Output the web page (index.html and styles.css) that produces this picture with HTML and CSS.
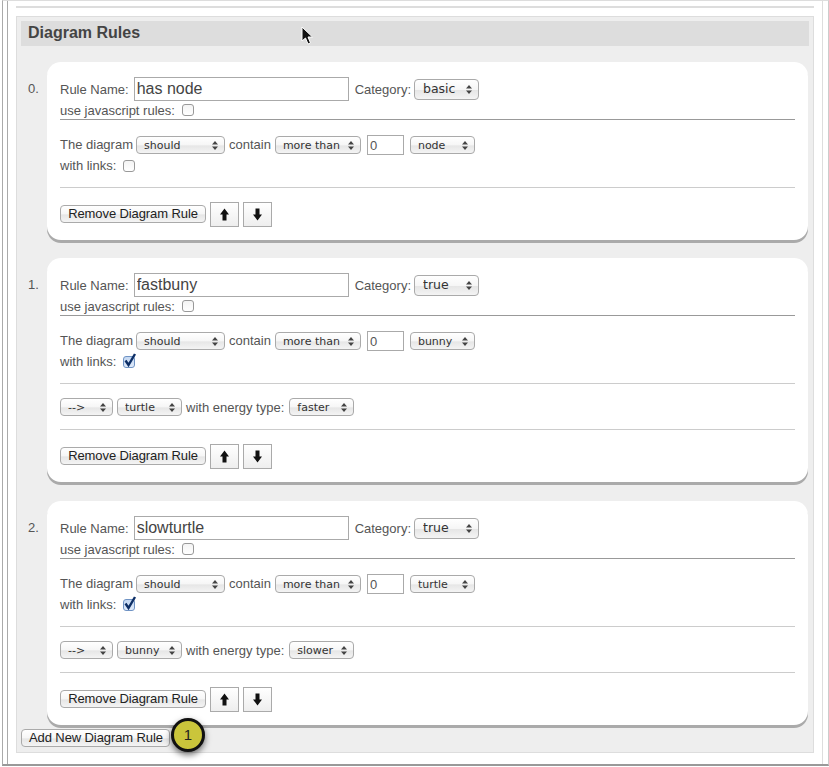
FILE: index.html
```html
<!DOCTYPE html>
<html lang="en">
<head>
  <meta charset="UTF-8">
  <meta name="viewport" content="width=device-width, initial-scale=1.0">
  <title>Diagram Rules</title>
  <link rel="stylesheet" href="styles.css">
</head>
<body>
  <div class="frame">
    <div class="page">
      <div class="top-line"></div>
      <div class="box">
        <h2 class="box-title">Diagram Rules</h2>

        <!-- rule 0 -->
        <div class="rule">
          <div class="rule-num">0.</div>
          <div class="card">
            <div class="row row-name">
              <label>Rule Name:</label>
              <input class="name-input" type="text" value="has node">
              <label>Category:</label>
              <select class="sel-category"><option>basic</option></select>
            </div>
            <div class="row row-js">
              <label>use javascript rules:</label>
              <input class="check" type="checkbox">
            </div>
            <div class="row row-contain">
              <label>The diagram</label>
              <select class="sel-should"><option>should</option></select>
              <label>contain</label>
              <select class="sel-more"><option>more than</option></select>
              <input class="num-input" type="text" value="0">
              <select class="sel-type"><option>node</option></select>
            </div>
            <div class="row row-links">
              <label>with links:</label>
              <input class="check" type="checkbox">
            </div>
            <div class="row row-actions">
              <button class="btn">Remove Diagram Rule</button>
              <button class="arrow-btn"><svg width="11" height="13" viewBox="0 0 11 13"><path d="M5.5 0.5 L10 6.5 H7.5 V12.5 H3.5 V6.5 H1 Z"/></svg></button>
              <button class="arrow-btn"><svg width="11" height="13" viewBox="0 0 11 13"><path d="M5.5 12.5 L10 6.5 H7.5 V0.5 H3.5 V6.5 H1 Z"/></svg></button>
            </div>
          </div>
        </div>

        <!-- rule 1 -->
        <div class="rule rule-mid">
          <div class="rule-num">1.</div>
          <div class="card">
            <div class="row row-name">
              <label>Rule Name:</label>
              <input class="name-input" type="text" value="fastbuny">
              <label>Category:</label>
              <select class="sel-category"><option>true</option></select>
            </div>
            <div class="row row-js">
              <label>use javascript rules:</label>
              <input class="check" type="checkbox">
            </div>
            <div class="row row-contain">
              <label>The diagram</label>
              <select class="sel-should"><option>should</option></select>
              <label>contain</label>
              <select class="sel-more"><option>more than</option></select>
              <input class="num-input" type="text" value="0">
              <select class="sel-type"><option>bunny</option></select>
            </div>
            <div class="row row-links">
              <label>with links:</label>
              <input class="check" type="checkbox" checked>
            </div>
            <div class="row row-link-def">
              <select class="sel-arrow"><option>--&gt;</option></select>
              <select class="sel-type"><option>turtle</option></select>
              <label>with energy type:</label>
              <select class="sel-type"><option>faster</option></select>
            </div>
            <div class="row row-actions">
              <button class="btn">Remove Diagram Rule</button>
              <button class="arrow-btn"><svg width="11" height="13" viewBox="0 0 11 13"><path d="M5.5 0.5 L10 6.5 H7.5 V12.5 H3.5 V6.5 H1 Z"/></svg></button>
              <button class="arrow-btn"><svg width="11" height="13" viewBox="0 0 11 13"><path d="M5.5 12.5 L10 6.5 H7.5 V0.5 H3.5 V6.5 H1 Z"/></svg></button>
            </div>
          </div>
        </div>

        <!-- rule 2 -->
        <div class="rule rule-last">
          <div class="rule-num">2.</div>
          <div class="card">
            <div class="row row-name">
              <label>Rule Name:</label>
              <input class="name-input" type="text" value="slowturtle">
              <label>Category:</label>
              <select class="sel-category"><option>true</option></select>
            </div>
            <div class="row row-js">
              <label>use javascript rules:</label>
              <input class="check" type="checkbox">
            </div>
            <div class="row row-contain">
              <label>The diagram</label>
              <select class="sel-should"><option>should</option></select>
              <label>contain</label>
              <select class="sel-more"><option>more than</option></select>
              <input class="num-input" type="text" value="0">
              <select class="sel-type"><option>turtle</option></select>
            </div>
            <div class="row row-links">
              <label>with links:</label>
              <input class="check" type="checkbox" checked>
            </div>
            <div class="row row-link-def">
              <select class="sel-arrow"><option>--&gt;</option></select>
              <select class="sel-type"><option>bunny</option></select>
              <label>with energy type:</label>
              <select class="sel-type"><option>slower</option></select>
            </div>
            <div class="row row-actions">
              <button class="btn">Remove Diagram Rule</button>
              <button class="arrow-btn"><svg width="11" height="13" viewBox="0 0 11 13"><path d="M5.5 0.5 L10 6.5 H7.5 V12.5 H3.5 V6.5 H1 Z"/></svg></button>
              <button class="arrow-btn"><svg width="11" height="13" viewBox="0 0 11 13"><path d="M5.5 12.5 L10 6.5 H7.5 V0.5 H3.5 V6.5 H1 Z"/></svg></button>
            </div>
          </div>
        </div>

        <button class="btn btn-add">Add New Diagram Rule</button>
      </div>
    </div>
  </div>

  <!-- callout badge and mouse pointer sit on top of the screenshot -->
  <div class="badge">1</div>
  <svg class="cursor" width="13" height="19" viewBox="0 0 13 19">
    <path d="M1 1 V15 L4.5 12 L7 18 L9.5 17 L7 11 H11.5 Z" fill="#111" stroke="#fff" stroke-width="1"/>
  </svg>
</body>
</html>
```

FILE: styles.css
```css
html, body {
  margin: 0;
  padding: 0;
  background-color: #ffffff;
}
body {
  position: relative;
  width: 829px;
  height: 767px;
  overflow: hidden;
  font-family: "Liberation Sans", Arial, sans-serif;
  font-size: 13px;
  color: #555555;
}
.frame {
  box-sizing: border-box;
  width: 827px;
  height: 766px;
  margin-left: 2px;
  border-top: 1px solid #dddddd;
  border-left: 1px solid #aaaaaa;
  border-right: 1px solid #cccccc;
  border-bottom: 2px solid #999999;
  padding: 0 5px 0 4px;
}
.page {
  box-sizing: border-box;
  height: 100%;
  border-left: 1px solid #aaaaaa;
  border-right: 1px solid #dddddd;
  padding: 5px 8px 0 8px;
}
.top-line {
  height: 2px;
  background-color: #dddddd;
}
.box {
  box-sizing: border-box;
  height: 737px;
  margin-top: 8px;
  padding: 4px;
  background-color: #eeeeee;
  border: 1px solid #dddddd;
}
.box-title {
  margin: 0 0 16px 0;
  height: 25px;
  line-height: 23px;
  padding-left: 7px;
  font-size: 16px;
  font-weight: 700;
  color: #444444;
  background-color: #dddddd;
}

/* one rule = number + white card */
.rule {
  display: flex;
  margin-bottom: 18px;
}
.rule-mid {
  margin-bottom: 19px;
}
.rule-last {
  margin-bottom: 4px;
}
.rule-num {
  width: 26px;
  padding: 19px 0 0 7px;
  box-sizing: border-box;
  font-size: 13px;
}
.card {
  box-sizing: border-box;
  width: 761px;
  padding: 15px 13px 13px 13px;
  background-color: #ffffff;
  border-radius: 14px;
  box-shadow: 0 3px 0 #aaaaaa;
}
.row {
  display: flex;
  align-items: center;
  gap: 4px;
}
.row label {
  white-space: nowrap;
}
.row-name {
  height: 24px;
  gap: 5px;
}
.row-name .name-input {
  margin-right: 1px;
}
.row-js {
  height: 18px;
  gap: 7px;
  border-bottom: 1px solid #999999;
}
.row-contain {
  height: 20px;
  margin-top: 15px;
}
.row-contain label {
  position: relative;
  top: -1px;
}
.row-links {
  height: 21px;
  gap: 7px;
  padding-bottom: 11px;
  border-bottom: 1px solid #cccccc;
}
.row-link-def {
  height: 18px;
  padding: 14px 0 13px 0;
  border-bottom: 1px solid #cccccc;
}
.row-link-def label {
  margin-right: 1px;
}
.row-actions {
  height: 25px;
  margin-top: 14px;
}

/* form controls */
select {
  appearance: none;
  -webkit-appearance: none;
  box-sizing: border-box;
  height: 18px;
  margin: 0;
  padding: 1px 0 0 7px;
  font-family: "DejaVu Sans", sans-serif;
  font-size: 11px;
  color: #333333;
  border: 1px solid #aaaaaa;
  border-radius: 4px;
  background-color: #eeeeee;
  background-image: url("data:image/svg+xml,%3Csvg xmlns='http://www.w3.org/2000/svg' width='6' height='9'%3E%3Cpath d='M3 0 L6 3.5 H0 Z M3 9 L6 5.5 H0 Z' fill='%23444444'/%3E%3C/svg%3E"), linear-gradient(#ffffff, #f6f6f6 50%, #e6e6e6 55%, #f4f4f4);
  background-repeat: no-repeat;
  background-position: right 6px center, 0 0;
  background-size: 6px 9px, 100% 100%;
}
.sel-category {
  width: 65px;
  height: 21px;
  font-size: 12.5px;
  margin-left: -2px;
  padding: 0 0 2px 8px;
}
.sel-should { width: 89px; margin-left: -1px; }
.sel-more { width: 86px; }
.sel-type { width: 65px; }
.sel-arrow { width: 53px; }
.name-input {
  box-sizing: border-box;
  width: 215px;
  height: 24px;
  margin: 0;
  padding: 0 2px;
  font-family: "Liberation Sans", Arial, sans-serif;
  font-size: 16px;
  color: #444444;
  border: 1px solid #aaaaaa;
}
.num-input {
  box-sizing: border-box;
  width: 37px;
  height: 20px;
  margin: 0 2px;
  padding: 0 2px;
  font-family: "Liberation Sans", Arial, sans-serif;
  font-size: 13px;
  color: #555555;
  border: 1px solid #aaaaaa;
}
.check {
  appearance: none;
  -webkit-appearance: none;
  position: relative;
  box-sizing: border-box;
  width: 12px;
  height: 12px;
  margin: 0;
  border: 1px solid #999999;
  border-radius: 3px;
  background: linear-gradient(#f4f4f4, #ffffff);
}
.check:checked {
  border-color: #6f93c4;
  background: linear-gradient(#c4d8f2, #dfeafa);
}
.check:checked::after {
  content: "";
  position: absolute;
  left: 0;
  top: -4px;
  width: 13px;
  height: 14px;
  background-image: url("data:image/svg+xml,%3Csvg xmlns='http://www.w3.org/2000/svg' width='13' height='14'%3E%3Cpath d='M1.5 7.5 L4.5 12 L11 1' fill='none' stroke='%230e2f66' stroke-width='2.4'/%3E%3C/svg%3E");
}
.btn {
  box-sizing: border-box;
  height: 18px;
  margin: 0;
  padding: 0 7px 1px 7px;
  font-family: "Liberation Sans", Arial, sans-serif;
  font-size: 13px;
  letter-spacing: -0.1px;
  color: #222222;
  white-space: nowrap;
  border: 1px solid #aaaaaa;
  border-radius: 4px;
  background: linear-gradient(#ffffff, #f6f6f6 50%, #e6e6e6 55%, #f4f4f4);
}
.row-actions .btn {
  width: 146px;
  margin-bottom: 2px;
}
.btn-add {
  display: block;
  width: 149px;
}
.arrow-btn {
  box-sizing: border-box;
  display: flex;
  align-items: center;
  justify-content: center;
  width: 29px;
  height: 25px;
  margin: 0;
  padding: 0;
  border: 1px solid #aaaaaa;
  background: linear-gradient(#ffffff, #eeeeee);
}
.arrow-btn svg {
  fill: #111111;
}

/* things lying over the page */
.badge {
  position: absolute;
  left: 171px;
  top: 718px;
  box-sizing: border-box;
  width: 34px;
  height: 34px;
  line-height: 28px;
  text-align: center;
  font-size: 15px;
  color: #222222;
  background-color: #cac53b;
  border: 3px solid #111111;
  border-radius: 50%;
  box-shadow: 0 3px 6px rgba(0, 0, 0, 0.55);
}
.cursor {
  position: absolute;
  left: 301px;
  top: 26px;
}
```
